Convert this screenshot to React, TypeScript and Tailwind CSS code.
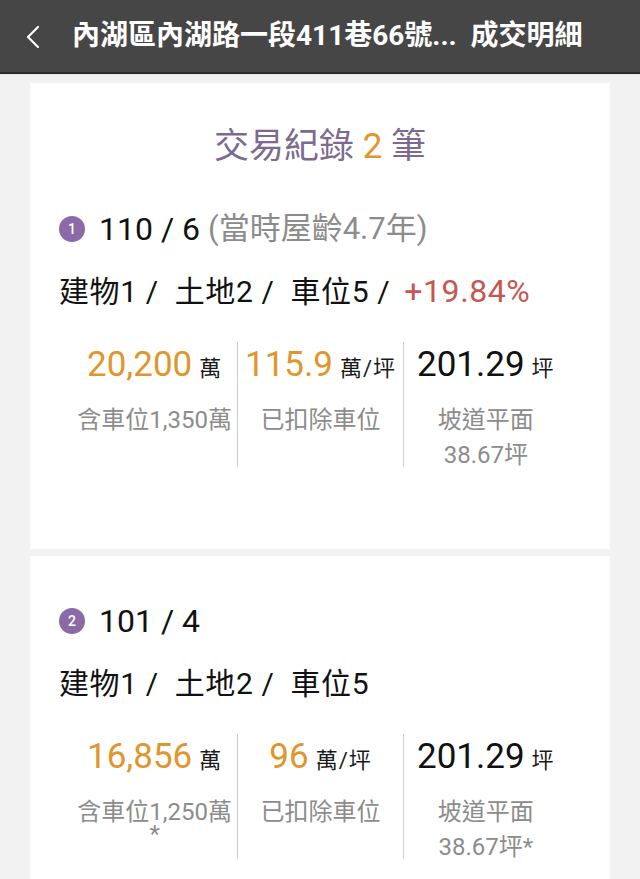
import React from "react";

type Stat = {
  value: string;
  unit: string;
  valueColor: string;
  lines: React.ReactNode[];
};

type Record = {
  no: number;
  date: string;
  age?: string;
  parts: string;
  change?: string;
  stats: Stat[];
};

const records: Record[] = [
  {
    no: 1,
    date: "110 / 6",
    age: "(當時屋齡4.7年)",
    parts: "建物1 /  土地2 /  車位5 /",
    change: "+19.84%",
    stats: [
      { value: "20,200", unit: "萬", valueColor: "text-[#e0952d]", lines: ["含車位1,350萬"] },
      { value: "115.9", unit: "萬/坪", valueColor: "text-[#e0952d]", lines: ["已扣除車位"] },
      { value: "201.29", unit: "坪", valueColor: "text-[#111]", lines: ["坡道平面", "38.67坪"] },
    ],
  },
  {
    no: 2,
    date: "101 / 4",
    parts: "建物1 /  土地2 /  車位5",
    stats: [
      {
        value: "16,856",
        unit: "萬",
        valueColor: "text-[#e0952d]",
        lines: [
          "含車位1,250萬",
          <span key="s" className="-mt-[6px] block leading-[20px]">*</span>,
        ],
      },
      { value: "96", unit: "萬/坪", valueColor: "text-[#e0952d]", lines: ["已扣除車位"] },
      { value: "201.29", unit: "坪", valueColor: "text-[#111]", lines: ["坡道平面", "38.67坪*"] },
    ],
  },
];

function StatCol({ stat, first }: { stat: Stat; first: boolean }) {
  return (
    <div className={`flex h-[125px] flex-col items-center ${first ? "" : "border-l border-[#cfcfcf]"}`}>
      <div className="mt-[3px] flex h-[40px] items-baseline justify-center whitespace-nowrap">
        <span className={`text-[35px] leading-[40px] ${stat.valueColor}`}>{stat.value}</span>
        <span className="ml-[7px] text-[22px] tracking-[1px] text-[#1a1a1a]">{stat.unit}</span>
      </div>
      <div className="mt-[18px] text-center text-[24px] leading-[35px] text-[#8c8c8c] whitespace-nowrap">
        {stat.lines.map((l, i) => (typeof l === "string" ? <div key={i}>{l}</div> : l))}
      </div>
    </div>
  );
}

function RecordBlock({ r }: { r: Record }) {
  return (
    <>
      <div className="flex h-[40px] items-center">
        <span className="mr-[14px] flex h-[26px] w-[26px] shrink-0 items-center justify-center rounded-full bg-[#8c6aa8] text-[14px] font-medium text-white">
          {r.no}
        </span>
        <span className="text-[32px] text-[#111]">{r.date}</span>
        {r.age && <span className="ml-[8px] text-[31px] text-[#8c8c8c]">{r.age}</span>}
      </div>
      <div className="mt-[22px] flex h-[40px] items-center whitespace-pre text-[30px] tracking-[0.6px] text-[#111]">
        <span>{r.parts}</span>
        {r.change && <span className="ml-[14px] text-[32px] text-[#c55650]">{r.change}</span>}
      </div>
      <div className="mx-[13px] mt-[31px] grid grid-cols-3">
        {r.stats.map((s, i) => (
          <StatCol key={i} stat={s} first={i === 0} />
        ))}
      </div>
    </>
  );
}

export default function App() {
  return (
    <div
      className="min-h-[879px] bg-[#f2f2f2]"
      style={{ fontFamily: "Roboto, 'Noto Sans CJK TC', 'Noto Sans', sans-serif" }}
    >
      <header className="flex h-[74px] items-center border-b-2 border-[#2a2a2a] bg-[#464646] text-white">
        <svg width="20" height="26" viewBox="0 0 20 26" className="ml-[24px] mt-[2px]">
          <polyline points="14,3 4,13 14,23" fill="none" stroke="white" strokeWidth="2.2" strokeLinecap="round" strokeLinejoin="round" />
        </svg>
        <h1 className="ml-[28px] whitespace-pre text-[28px] font-bold">內湖區內湖路一段411巷66號...  成交明細</h1>
      </header>
      <div className="h-px bg-[#e4e4e4]" />

      <main className="flex flex-col gap-[7px] px-[30px] pt-[8px]">
        <section className="h-[466px] bg-white px-[29px] pt-[42px]">
          <h2 className="text-center text-[35px] leading-[44px] text-[#7c6a8f]">
            交易紀錄 <span className="text-[#e0952d]">2</span> 筆
          </h2>
          <div className="mt-[40px]">
            <RecordBlock r={records[0]} />
          </div>
        </section>
        <section className="h-[330px] bg-white px-[29px] pt-[45px]">
          <RecordBlock r={records[1]} />
        </section>
      </main>
    </div>
  );
}
